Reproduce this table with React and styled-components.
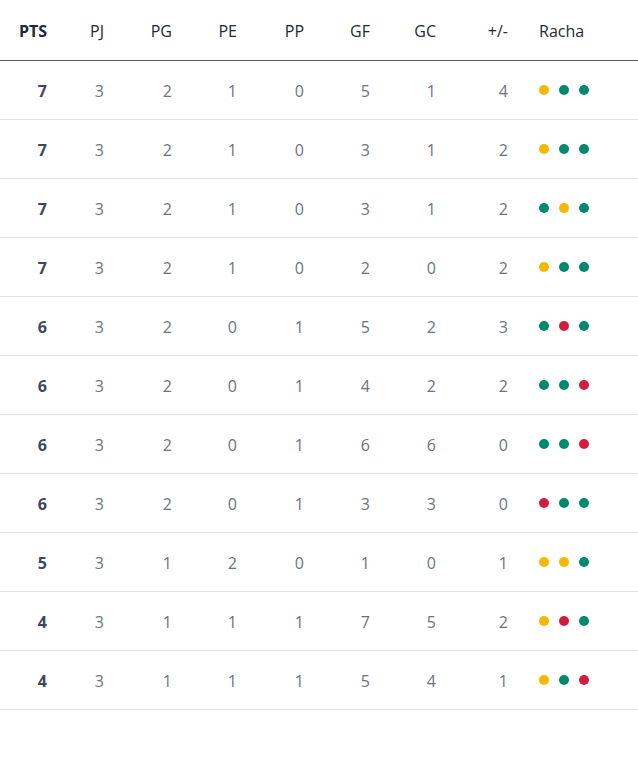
import React from "react";
import styled, { createGlobalStyle } from "styled-components";

const GlobalStyle = createGlobalStyle`
  body {
    margin: 0;
    background: #ffffff;
    font-family: "Open Sans", "Noto Sans", sans-serif;
  }
`;

const COLS = "57px 57px 68px 65px 67px 66px 66px 72px 1fr";

const rows = [
  [7, 3, 2, 1, 0, 5, 1, 4, "ygg"],
  [7, 3, 2, 1, 0, 3, 1, 2, "ygg"],
  [7, 3, 2, 1, 0, 3, 1, 2, "gyg"],
  [7, 3, 2, 1, 0, 2, 0, 2, "ygg"],
  [6, 3, 2, 0, 1, 5, 2, 3, "grg"],
  [6, 3, 2, 0, 1, 4, 2, 2, "ggr"],
  [6, 3, 2, 0, 1, 6, 6, 0, "ggr"],
  [6, 3, 2, 0, 1, 3, 3, 0, "rgg"],
  [5, 3, 1, 2, 0, 1, 0, 1, "yyg"],
  [4, 3, 1, 1, 1, 7, 5, 2, "yrg"],
  [4, 3, 1, 1, 1, 5, 4, 1, "ygr"],
];

const headers = ["PTS", "PJ", "PG", "PE", "PP", "GF", "GC", "+/-"];

const dotColors = { y: "#f5b800", g: "#00896a", r: "#d21d3f" };

const Table = styled.div`
  width: 638px;
`;

const HeadRow = styled.div`
  display: grid;
  grid-template-columns: ${COLS};
  height: 60px;
  align-items: center;
  border-bottom: 1px solid #4b5663;
`;

const Row = styled.div`
  display: grid;
  grid-template-columns: ${COLS};
  height: 58px;
  align-items: center;
  border-bottom: 1px solid #dde1e5;
`;

const HeadCell = styled.div`
  text-align: right;
  padding-right: 10px;
  font-size: 16px;
  font-weight: ${(p) => (p.$bold ? 700 : 400)};
  color: #1e2933;
  padding-top: 2px;
`;

const RachaHead = styled.div`
  padding-left: 21px;
  font-size: 16px;
  color: #1e2933;
  padding-top: 2px;
`;

const Cell = styled.div`
  text-align: right;
  padding-right: 10px;
  font-size: 16px;
  font-weight: ${(p) => (p.$bold ? 700 : 400)};
  color: ${(p) => (p.$bold ? "#3c4856" : "#6b747e")};
  padding-top: 2px;
`;

const Streak = styled.div`
  display: flex;
  gap: 10px;
  padding-left: 21px;
`;

const Dot = styled.span`
  width: 10px;
  height: 10px;
  border-radius: 50%;
  background: ${(p) => p.$color};
`;

export default function App() {
  return (
    <>
      <GlobalStyle />
      <Table>
        <HeadRow>
          {headers.map((h, i) => (
            <HeadCell key={h} $bold={i === 0}>
              {h}
            </HeadCell>
          ))}
          <RachaHead>Racha</RachaHead>
        </HeadRow>
        {rows.map((r, idx) => (
          <Row key={idx}>
            {r.slice(0, 8).map((v, i) => (
              <Cell key={i} $bold={i === 0}>
                {v}
              </Cell>
            ))}
            <Streak>
              {r[8].split("").map((c, i) => (
                <Dot key={i} $color={dotColors[c]} />
              ))}
            </Streak>
          </Row>
        ))}
      </Table>
    </>
  );
}
